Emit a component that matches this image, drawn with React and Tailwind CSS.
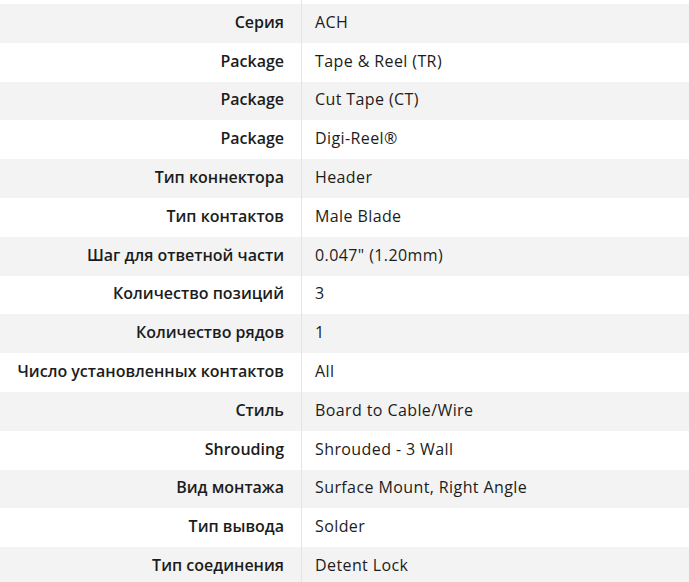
const rows = [
  ['Серия', 'ACH'],
  ['Package', 'Tape & Reel (TR)'],
  ['Package', 'Cut Tape (CT)'],
  ['Package', 'Digi-Reel®'],
  ['Тип коннектора', 'Header'],
  ['Тип контактов', 'Male Blade'],
  ['Шаг для ответной части', '0.047" (1.20mm)'],
  ['Количество позиций', '3'],
  ['Количество рядов', '1'],
  ['Число установленных контактов', 'All'],
  ['Стиль', 'Board to Cable/Wire'],
  ['Shrouding', 'Shrouded - 3 Wall'],
  ['Вид монтажа', 'Surface Mount, Right Angle'],
  ['Тип вывода', 'Solder'],
  ['Тип соединения', 'Detent Lock'],
];

const App = () => {
  return (
    <div className="w-[689px] h-[582px] overflow-hidden bg-white text-[16px] leading-[22px] text-[#1c1c1c] font-['Open_Sans',sans-serif]">
      <div className="flex h-[4px]">
        <div className="w-[302px] border-r border-[#e4e4e4]" />
        <div className="flex-1" />
      </div>
      {rows.map(([label, value], i) => (
        <div
          key={i}
          className={`flex h-[38.8px] ${i % 2 === 0 ? 'bg-[#f3f3f3]' : 'bg-white'}`}
        >
          <div className="w-[302px] flex items-center justify-end pr-[17px] pb-[3px] border-r border-[#e4e4e4] font-semibold">
            {label}
          </div>
          <div className="flex-1 flex items-center pl-[13px] pb-[3px] tracking-[0.4px]">{value}</div>
        </div>
      ))}
    </div>
  );
};

export default App;
